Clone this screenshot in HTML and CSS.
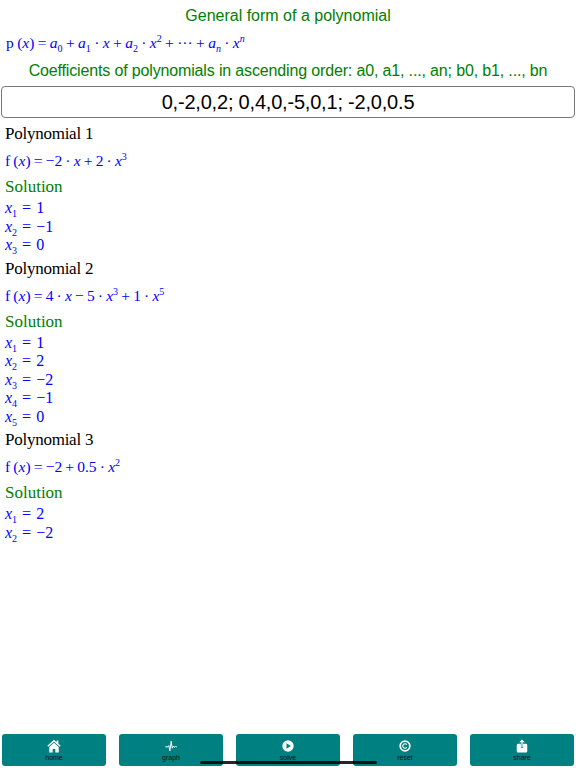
FILE: index.html
```html
<!DOCTYPE html>
<html lang="en">
<head>
<meta charset="utf-8">
<title>Polynomial</title>
<link rel="stylesheet" href="styles.css">
</head>
<body>
<div class="page">
  <main class="content">
    <h1 class="title first">General form of a polynomial</h1>
    <p class="formula general">p (<i>x</i>) = <i>a</i><sub>0</sub> + <i>a</i><sub>1</sub> · <i>x</i> + <i>a</i><sub>2</sub> · <i>x</i><sup>2</sup> + ··· + <i>a<sub>n</sub></i> · <i>x<sup>n</sup></i></p>
    <h2 class="title second">Coefficients of polynomials in ascending order: a0, a1, ..., an; b0, b1, ..., bn</h2>
    <div class="input">0,-2,0,2; 0,4,0,-5,0,1; -2,0,0.5</div>

    <section class="poly">
      <h3 class="name">Polynomial 1</h3>
      <p class="formula fx">f (<i>x</i>) = −2 · <i>x</i> + 2 · <i>x</i><sup>3</sup></p>
      <h4 class="solution">Solution</h4>
      <ul class="roots">
        <li><i>x</i><sub>1</sub> = 1</li>
        <li><i>x</i><sub>2</sub> = −1</li>
        <li><i>x</i><sub>3</sub> = 0</li>
      </ul>
    </section>

    <section class="poly">
      <h3 class="name">Polynomial 2</h3>
      <p class="formula fx">f (<i>x</i>) = 4 · <i>x</i> − 5 · <i>x</i><sup>3</sup> + 1 · <i>x</i><sup>5</sup></p>
      <h4 class="solution">Solution</h4>
      <ul class="roots">
        <li><i>x</i><sub>1</sub> = 1</li>
        <li><i>x</i><sub>2</sub> = 2</li>
        <li><i>x</i><sub>3</sub> = −2</li>
        <li><i>x</i><sub>4</sub> = −1</li>
        <li><i>x</i><sub>5</sub> = 0</li>
      </ul>
    </section>

    <section class="poly">
      <h3 class="name">Polynomial 3</h3>
      <p class="formula fx">f (<i>x</i>) = −2 + 0.5 · <i>x</i><sup>2</sup></p>
      <h4 class="solution">Solution</h4>
      <ul class="roots">
        <li><i>x</i><sub>1</sub> = 2</li>
        <li><i>x</i><sub>2</sub> = −2</li>
      </ul>
    </section>
  </main>

  <nav class="toolbar">
    <a class="tool">
      <svg class="icon" viewBox="0 0 16 16"><path fill="#fff" d="M8 .8 .4 7.800l1 1.100L8 3l6.600 5.900 1-1.100L13 5.400V1.800h-2v1.800z"/><path fill="#fff" d="M8 4.300 2.600 9.200V15.500h3.900v-4h3v4h3.900V9.200z"/></svg>
      <span>home</span>
    </a>
    <a class="tool">
      <svg class="icon" viewBox="0 0 16 16"><path fill="none" stroke="#fff" stroke-width="1.100" d="M1.500 9H4.500l1-1.500 1.200 6L8.200 2.500l1.200 8L10.800 8l1 1.500 1.400-1 1.500.6"/></svg>
      <span>graph</span>
    </a>
    <a class="tool">
      <svg class="icon" viewBox="0 0 16 16"><circle cx="8" cy="8" r="6.500" fill="#fff"/><path fill="#008080" d="M6.300 4.800v6.400L11.300 8z"/></svg>
      <span>solve</span>
    </a>
    <a class="tool">
      <svg class="icon" viewBox="0 0 16 16"><circle cx="8" cy="8" r="5.500" fill="none" stroke="#fff" stroke-width="2"/><path fill="none" stroke="#fff" stroke-width="1.300" d="M10 6.300A2.600 2.600 0 1 0 10 9.700"/></svg>
      <span>reset</span>
    </a>
    <a class="tool">
      <svg class="icon" viewBox="0 0 16 16"><path fill="#fff" d="M3.500 5.500h3.200V10h2.600V5.500h3.200a1.500 1.500 0 0 1 1.500 1.500v7a1.500 1.500 0 0 1-1.500 1.500h-9A1.500 1.500 0 0 1 2 14V7a1.500 1.500 0 0 1 1.500-1.500z"/><path fill="#fff" d="M8 .5 4.800 3.800h2.500V9h1.400V3.800h2.500z"/></svg>
      <span>share</span>
    </a>
  </nav>
  <div class="home-bar"></div>
</div>
</body>
</html>
```

FILE: styles.css
```css
* { box-sizing: border-box; }
html, body { margin: 0; padding: 0; background: #fff; }
.page {
  position: relative;
  width: 576px;
  height: 768px;
  display: flex;
  flex-direction: column;
  overflow: hidden;
}
.content { flex: 1; padding: 0 1px; }
.title {
  margin: 0;
  font-family: "Liberation Sans", Arial, sans-serif;
  font-weight: 400;
  color: #008000;
  text-align: center;
  font-size: 16px;
  line-height: 20px;
}
.first { padding-top: 6px; }
.second { margin-top: 9px; letter-spacing: -0.15px; }
.formula {
  margin: 0;
  font-family: "Liberation Serif", "Times New Roman", serif;
  color: #0000ff;
  font-size: 15.500px;
  line-height: 18px;
  word-spacing: -0.7px;
}
.general { margin-top: 8px; padding-left: 5px; word-spacing: -0.5px; }
.formula sup, .formula sub, .roots sub { font-size: 10px; line-height: 0; }
.input {
  height: 32px;
  margin: 5px 0;
  border: 1px solid #777;
  border-radius: 4px;
  font-family: "Liberation Sans", Arial, sans-serif;
  font-size: 20px;
  letter-spacing: -0.2px;
  line-height: 30px;
  text-align: center;
  color: #000;
}
.poly { padding-left: 4px; }
.name {
  margin: 3px 0 0;
  font-family: "Liberation Serif", "Times New Roman", serif;
  font-weight: 400;
  font-size: 17px;
  letter-spacing: -0.25px;
  line-height: 22px;
  color: #000;
}
.fx { margin-top: 7px; }
.solution {
  margin: 6px 0 0;
  font-family: "Liberation Serif", "Times New Roman", serif;
  font-weight: 400;
  font-size: 17px;
  line-height: 22px;
  color: #008000;
}
.roots {
  list-style: none;
  margin: 1px 0 0;
  padding: 0;
  font-family: "Liberation Serif", "Times New Roman", serif;
  color: #0000ff;
  font-size: 16px;
  line-height: 18.500px;
  word-spacing: 1px;
}
.toolbar {
  display: flex;
  justify-content: space-between;
  padding: 0 2px 2px;
}
.tool {
  width: 104px;
  height: 32px;
  background: #008080;
  border-radius: 3px;
  display: flex;
  flex-direction: column;
  align-items: center;
  font-family: "Liberation Sans", Arial, sans-serif;
  font-size: 7px;
  line-height: 9px;
  color: #111;
}
.icon { width: 14px; height: 14px; margin-top: 5px; }
.home-bar {
  position: absolute;
  left: 200px;
  top: 761px;
  width: 177px;
  height: 2.500px;
  border-radius: 2px;
  background: rgba(0, 0, 0, .85);
}
```
